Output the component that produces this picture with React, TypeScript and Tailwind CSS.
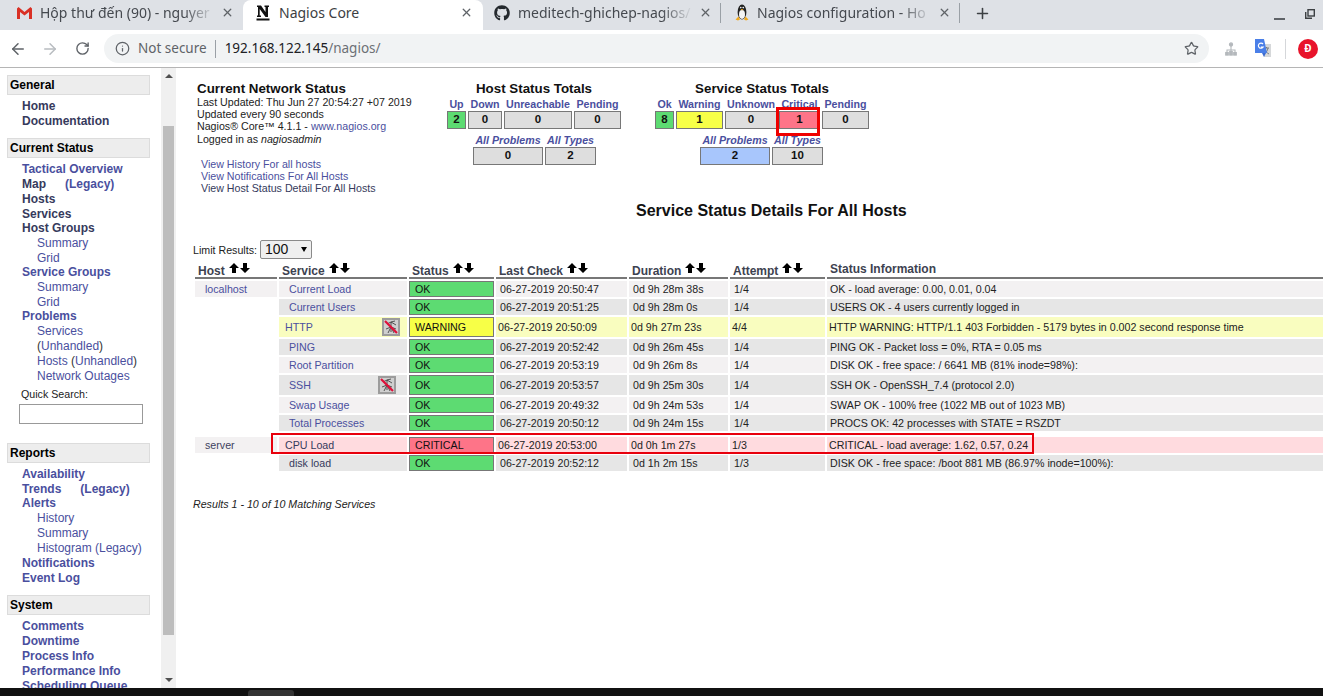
import { ArrowLeft, ArrowRight, Info, Plus, RotateCw, Star, X } from 'lucide-react'
import { FaGithub } from 'react-icons/fa'

const dark = 'text-[#363a5c]'
const link = 'text-[#4a4f9e]'

type NavItem = { label: string; legacy?: string; visited?: boolean; sub?: string[] }

const general: NavItem[] = [
  { label: 'Home', visited: true },
  { label: 'Documentation', visited: true },
]

const reports: NavItem[] = [
  { label: 'Availability' },
  { label: 'Trends', legacy: '(Legacy)' },
  { label: 'Alerts', sub: ['History', 'Summary', 'Histogram (Legacy)'] },
  { label: 'Notifications' },
  { label: 'Event Log' },
]

const system: NavItem[] = [
  { label: 'Comments' },
  { label: 'Downtime' },
  { label: 'Process Info' },
  { label: 'Performance Info' },
  { label: 'Scheduling Queue' },
]

type Row = {
  host?: string
  service: string
  status: 'OK' | 'WARNING' | 'CRITICAL'
  check: string
  duration: string
  attempt: string
  info: string
  icon?: 'http' | 'ssh'
  shade: 'odd' | 'even'
  visited?: boolean
}

const rows: Row[] = [
  { host: 'localhost', service: 'Current Load', status: 'OK', check: '06-27-2019 20:50:47', duration: '0d 9h 28m 38s', attempt: '1/4', info: 'OK - load average: 0.00, 0.01, 0.04', shade: 'odd' },
  { service: 'Current Users', status: 'OK', check: '06-27-2019 20:51:25', duration: '0d 9h 28m 0s', attempt: '1/4', info: 'USERS OK - 4 users currently logged in', shade: 'even' },
  { service: 'HTTP', status: 'WARNING', check: '06-27-2019 20:50:09', duration: '0d 9h 27m 23s', attempt: '4/4', info: 'HTTP WARNING: HTTP/1.1 403 Forbidden - 5179 bytes in 0.002 second response time', icon: 'http', shade: 'odd' },
  { service: 'PING', status: 'OK', check: '06-27-2019 20:52:42', duration: '0d 9h 26m 45s', attempt: '1/4', info: 'PING OK - Packet loss = 0%, RTA = 0.05 ms', shade: 'even' },
  { service: 'Root Partition', status: 'OK', check: '06-27-2019 20:53:19', duration: '0d 9h 26m 8s', attempt: '1/4', info: 'DISK OK - free space: / 6641 MB (81% inode=98%):', shade: 'odd' },
  { service: 'SSH', status: 'OK', check: '06-27-2019 20:53:57', duration: '0d 9h 25m 30s', attempt: '1/4', info: 'SSH OK - OpenSSH_7.4 (protocol 2.0)', icon: 'ssh', shade: 'even' },
  { service: 'Swap Usage', status: 'OK', check: '06-27-2019 20:49:32', duration: '0d 9h 24m 53s', attempt: '1/4', info: 'SWAP OK - 100% free (1022 MB out of 1023 MB)', shade: 'odd' },
  { service: 'Total Processes', status: 'OK', check: '06-27-2019 20:50:12', duration: '0d 9h 24m 15s', attempt: '1/4', info: 'PROCS OK: 42 processes with STATE = RSZDT', shade: 'even' },
]

const serverRows: Row[] = [
  { host: 'server', service: 'CPU Load', status: 'CRITICAL', check: '06-27-2019 20:53:00', duration: '0d 0h 1m 27s', attempt: '1/3', info: 'CRITICAL - load average: 1.62, 0.57, 0.24', shade: 'odd', visited: true },
  { service: 'disk load', status: 'OK', check: '06-27-2019 20:52:12', duration: '0d 1h 2m 15s', attempt: '1/3', info: 'DISK OK - free space: /boot 881 MB (86.97% inode=100%):', shade: 'even', visited: true },
]

function GmailIcon() {
  return (
    <svg width="15" height="12" viewBox="0 0 15 12" className="shrink-0">
      <path d="M0 1.5 V12 H3 V5 L7.5 8.5 L12 5 V12 H15 V1.5 L13.5 0 L7.5 5 L1.5 0 Z" fill="#d93025" />
    </svg>
  )
}

function NagiosIcon() {
  return (
    <svg width="14" height="16" viewBox="0 0 14 16" className="shrink-0">
      <path d="M1 0.5 H5 L9.5 7 V2 H8.5 V0.5 H13 V2 H12 V12 H9.5 L3.7 4 V10.5 H5 V12 H1 V10.5 H2 V2 H1 Z" fill="#111" />
      <rect x="0.5" y="13.5" width="13" height="2" fill="#111" />
    </svg>
  )
}

function TuxIcon() {
  return (
    <svg width="14" height="17" viewBox="0 0 14 17" className="shrink-0">
      <ellipse cx="7" cy="8" rx="4.4" ry="7.6" fill="#222" />
      <ellipse cx="7" cy="10.5" rx="3" ry="4.4" fill="#f4f4f4" />
      <circle cx="5.8" cy="3.6" r="0.8" fill="#fff" />
      <circle cx="8.2" cy="3.6" r="0.8" fill="#fff" />
      <path d="M5.6 5 H8.4 L7 6.4 Z" fill="#f0a81c" />
      <path d="M0.5 15.5 L3.5 12.5 L5 15.5 L3 16.5 Z M13.5 15.5 L10.5 12.5 L9 15.5 L11 16.5 Z" fill="#f0a81c" />
    </svg>
  )
}

function TranslateIcon() {
  return (
    <svg width="16" height="20" viewBox="0 0 16 20" className="shrink-0">
      <path d="M6 5 H16 V18 H9 Z" fill="#d6d8da" />
      <path d="M9 9 H14 M11.5 8 V9 M13 9 C12.5 12 11 13.5 9.5 14.5 M10 10.5 C10.8 12.5 12 14 14 15" stroke="#70757a" strokeWidth="0.9" fill="none" />
      <path d="M0 0 H9 L12 14 H0 Z" fill="#4a7fe8" />
      <path d="M8 5 A2.6 2.6 0 1 0 8.2 8 H5.8" stroke="#fff" strokeWidth="1.2" fill="none" />
      <path d="M7 14 L9 18 L11 14 Z" fill="#3d6bd0" />
    </svg>
  )
}

function ExtensionIcon() {
  return (
    <svg width="12" height="14" viewBox="0 0 12 14" className="shrink-0" fill="none" stroke="#b4b8bc" strokeWidth="1.1">
      <circle cx="6" cy="2.5" r="1.6" fill="#b4b8bc" />
      <path d="M6 4 V9 M2 11 V8 H10 V11" />
      <rect x="0.7" y="10.5" width="2.6" height="2.6" fill="#b4b8bc" />
      <rect x="4.7" y="9.5" width="2.6" height="3.6" fill="#b4b8bc" />
      <rect x="8.7" y="10.5" width="2.6" height="2.6" fill="#b4b8bc" />
    </svg>
  )
}

function Tab({ icon, title, x, active, sep, mask, width }: { icon: React.ReactNode; title: string; x: string; active?: boolean; sep?: boolean; mask?: boolean; width: string }) {
  return (
    <div className={`relative flex h-full items-center pb-[5px] ${width} ${x} ${active ? 'rounded-t-lg bg-white text-[#3c4043]' : 'text-[#45494f]'}`}>
      {icon}
      <span className={`mr-[6px] flex-1 overflow-hidden whitespace-nowrap text-[14px] ${mask ? '[mask-image:linear-gradient(to_right,black_82%,transparent)]' : ''}`}>{title}</span>
      <X size={13} strokeWidth={2.4} className="shrink-0 text-[#5f6368]" />
      {sep && <div className="absolute right-0 top-[3px] h-[20px] w-px bg-[#9aa0a6]" />}
    </div>
  )
}

function TabStrip() {
  return (
    <div className="flex h-[30px] shrink-0 items-end bg-[#dee1e6] font-['Noto_Sans',sans-serif]">
      <Tab width="w-[243px]" x="pl-[17px] pr-[9px]" title="Hộp thư đến (90) - nguyer" mask icon={<span className="mr-[8px]"><GmailIcon /></span>} />
      <Tab width="w-[240px]" x="pl-[13px] pr-[10px]" active title="Nagios Core" icon={<span className="mr-[9px]"><NagiosIcon /></span>} />
      <Tab width="w-[238px]" x="pl-[11px] pr-[9px]" sep mask title="meditech-ghichep-nagios/" icon={<span className="mr-[8px]"><FaGithub size={16} className="text-[#24292e]" /></span>} />
      <Tab width="w-[239px]" x="pl-[14px] pr-[9px]" sep mask title="Nagios configuration - Ho" icon={<span className="mr-[8px]"><TuxIcon /></span>} />
      <Plus size={17} strokeWidth={2.2} className="mb-[8px] ml-[14px] text-[#3c4043]" />
      <div className="mb-[10px] ml-auto flex items-center gap-[20px] pr-[8px]">
        <div className="mt-[10px] h-[2px] w-[11px] bg-[#5f6368]" />
        <svg width="10" height="10" viewBox="0 0 10 10" fill="none" stroke="#3c4043" strokeWidth="1.4">
          <rect x="3" y="0.7" width="6.3" height="6.3" />
          <path d="M0.7 3 V9.3 H7" />
        </svg>
      </div>
    </div>
  )
}

function Toolbar() {
  return (
    <div className="flex h-[38px] shrink-0 items-center border-b border-[#b5b5b5] bg-white font-['Noto_Sans',sans-serif]">
      <div className="flex w-[104px] items-center pl-[9px]">
        <ArrowLeft size={18} strokeWidth={2} className="text-[#5f6368]" />
        <ArrowRight size={18} strokeWidth={2} className="ml-[14px] text-[#b8bcc0]" />
        <RotateCw size={15} strokeWidth={2.2} className="ml-[16px] text-[#5f6368]" />
      </div>
      <div className="flex h-[29px] w-[1105px] items-center rounded-full bg-[#f1f3f4] pl-[11px] pr-[10px] text-[13.5px]">
        <Info size={15} strokeWidth={2} className="text-[#5f6368]" />
        <span className="ml-[8px] text-[#5f6368]">Not secure</span>
        <div className="ml-[8px] h-[18px] w-px bg-[#9aa0a6]" />
        <span className="ml-[9px] text-[#202124]">192.168.122.145<span className="text-[#6c7075]">/nagios/</span></span>
        <Star size={15} strokeWidth={2} className="ml-auto text-[#5f6368]" />
      </div>
      <div className="ml-[16px]"><ExtensionIcon /></div>
      <div className="ml-[18px]"><TranslateIcon /></div>
      <div className="ml-[14px] h-[20px] w-px bg-[#d5d7da]" />
      <div className="ml-[12px] flex h-[20px] w-[20px] items-center justify-center rounded-full bg-[#e8142b] text-[10px] font-bold text-white">Đ</div>
    </div>
  )
}

function NavHeading({ children }: { children: string }) {
  return <div className="flex h-[20px] w-[143px] items-center border border-[#dcdcdc] bg-[#ededed] pl-[2px] text-[12px] font-bold text-black">{children}</div>
}

function NavList({ items }: { items: NavItem[] }) {
  return (
    <div className="pl-[15px] pt-[3px]">
      {items.map((item) => (
        <div key={item.label} className={item.sub ? '-mt-px' : ''}>
          <div className={`flex h-[15px] items-center whitespace-nowrap text-[12px] font-bold ${item.visited ? dark : link}`}>
            <span>{item.label}</span>
            {item.legacy && <span className="ml-[19px]">{item.legacy}</span>}
          </div>
          {item.sub?.map((s) => (
            <div key={s} className={`flex h-[15px] items-center whitespace-nowrap pl-[15px] text-[12px] ${link}`}>{s}</div>
          ))}
        </div>
      ))}
    </div>
  )
}

function Sidebar() {
  return (
    <div className="flex h-full w-[176px] shrink-0 overflow-hidden font-['Liberation_Sans',sans-serif]">
      <div className="h-full w-[161px] shrink-0 pl-[7px] pt-[7px]">
        <NavHeading>General</NavHeading>
        <NavList items={general} />
        <div className="mt-[10px]"><NavHeading>Current Status</NavHeading></div>
        <div className="pl-[15px] pt-[3px] text-[12px]">
          <div className={`flex h-[15px] items-center font-bold ${link}`}>Tactical Overview</div>
          <div className="flex h-[15px] items-center font-bold">
            <span className={dark}>Map</span>
            <span className={`ml-[19px] ${link}`}>(Legacy)</span>
          </div>
          <div className={`flex h-[15px] items-center font-bold ${dark}`}>Hosts</div>
          <div className={`flex h-[15px] items-center font-bold ${dark}`}>Services</div>
          <div className={`-mt-px flex h-[15px] items-center font-bold ${dark}`}>Host Groups</div>
          <div className={`flex h-[15px] items-center pl-[15px] ${link}`}>Summary</div>
          <div className={`flex h-[15px] items-center pl-[15px] ${link}`}>Grid</div>
          <div className={`-mt-px flex h-[15px] items-center font-bold ${link}`}>Service Groups</div>
          <div className={`flex h-[15px] items-center pl-[15px] ${link}`}>Summary</div>
          <div className={`flex h-[15px] items-center pl-[15px] ${link}`}>Grid</div>
          <div className={`-mt-px flex h-[15px] items-center font-bold ${link}`}>Problems</div>
          <div className={`flex h-[15px] items-center pl-[15px] ${link}`}>Services</div>
          <div className="flex h-[15px] items-center whitespace-pre pl-[15px] text-[#333]">(<span className={link}>Unhandled</span>)</div>
          <div className="flex h-[15px] items-center whitespace-pre pl-[15px] text-[#333]"><span className={link}>Hosts</span> (<span className={link}>Unhandled</span>)</div>
          <div className={`flex h-[15px] items-center pl-[15px] ${link}`}>Network Outages</div>
        </div>
        <div className="mt-[5px] pl-[14px] text-[10.67px] leading-[13px] text-[#222]">Quick Search:</div>
        <div className="ml-[12px] mt-[3px] h-[20px] w-[124px] border border-[#999] bg-white" />
        <div className="mt-[19px]"><NavHeading>Reports</NavHeading></div>
        <NavList items={reports} />
        <div className="mt-[10px]"><NavHeading>System</NavHeading></div>
        <NavList items={system} />
      </div>
      <div className="flex h-full w-[15px] shrink-0 flex-col items-center bg-[#f0f0f0]">
        <div className="mt-[6px] h-0 w-0 border-x-[4px] border-b-[4px] border-x-transparent border-b-[#505050]" />
        <div className="mt-[48px] h-[509px] w-[11px] bg-[#bdbdbd]" />
        <div className="mt-[43px] h-0 w-0 border-x-[4px] border-t-[4px] border-x-transparent border-t-[#505050]" />
      </div>
    </div>
  )
}

function TotalCell({ value, width, tone }: { value: string; width: string; tone?: string }) {
  return (
    <div className={`flex h-[18px] items-center justify-center border border-[#777] text-[11.5px] font-bold text-[#111] ${width} ${tone ?? 'bg-[#dedede]'}`}>{value}</div>
  )
}

function TotalLabel({ children, width, italic }: { children: string; width: string; italic?: boolean }) {
  return <div className={`whitespace-nowrap text-center text-[10.67px] font-bold leading-[13px] ${link} ${width} ${italic ? 'italic' : ''}`}>{children}</div>
}

function HostTotals() {
  return (
    <div className="w-[174px] shrink-0">
      <div className="h-[17px] text-center text-[13.33px] font-bold leading-[15px] text-[#111]">Host Status Totals</div>
      <div className="flex gap-[2px]">
        <TotalLabel width="w-[19px]">Up</TotalLabel>
        <TotalLabel width="w-[34px]">Down</TotalLabel>
        <TotalLabel width="w-[68px]">Unreachable</TotalLabel>
        <TotalLabel width="w-[47px]">Pending</TotalLabel>
      </div>
      <div className="flex gap-[2px]">
        <TotalCell value="2" width="w-[19px]" tone="bg-[#5ddb72]" />
        <TotalCell value="0" width="w-[34px]" />
        <TotalCell value="0" width="w-[68px]" />
        <TotalCell value="0" width="w-[47px]" />
      </div>
      <div className="ml-[26px] mt-[5px] flex gap-[2px]">
        <TotalLabel italic width="w-[70px]">All Problems</TotalLabel>
        <TotalLabel italic width="w-[51px]">All Types</TotalLabel>
      </div>
      <div className="ml-[26px] flex gap-[2px]">
        <TotalCell value="0" width="w-[70px]" />
        <TotalCell value="2" width="w-[51px]" />
      </div>
    </div>
  )
}

function ServiceTotals() {
  return (
    <div className="relative ml-[34px] w-[214px] shrink-0">
      <div className="h-[17px] text-center text-[13.33px] font-bold leading-[15px] text-[#111]">Service Status Totals</div>
      <div className="flex gap-[2px]">
        <TotalLabel width="w-[19px]">Ok</TotalLabel>
        <TotalLabel width="w-[47px]">Warning</TotalLabel>
        <TotalLabel width="w-[52px]">Unknown</TotalLabel>
        <TotalLabel width="w-[41px]">Critical</TotalLabel>
        <TotalLabel width="w-[47px]">Pending</TotalLabel>
      </div>
      <div className="flex gap-[2px]">
        <TotalCell value="8" width="w-[19px]" tone="bg-[#5ddb72]" />
        <TotalCell value="1" width="w-[47px]" tone="bg-[#f7ff47]" />
        <TotalCell value="0" width="w-[52px]" />
        <TotalCell value="1" width="w-[41px]" tone="bg-[#fe7488]" />
        <TotalCell value="0" width="w-[47px]" />
      </div>
      <div className="ml-[45px] mt-[5px] flex gap-[2px]">
        <TotalLabel italic width="w-[70px]">All Problems</TotalLabel>
        <TotalLabel italic width="w-[51px]">All Types</TotalLabel>
      </div>
      <div className="ml-[45px] flex gap-[2px]">
        <TotalCell value="2" width="w-[70px]" tone="bg-[#a8c6fc]" />
        <TotalCell value="10" width="w-[51px]" />
      </div>
      {/* highlight box someone drew over the screenshot */}
      <div className="absolute left-[121px] top-[26px] h-[29px] w-[44px] border-[3px] border-[#f00000]" />
    </div>
  )
}

function SortArrows() {
  return (
    <svg width="21" height="10" viewBox="0 0 21 10" className="ml-[4px] mt-[2px] shrink-0" fill="#000">
      <path d="M5 0 L10 5 H7 V10 H3 V5 H0 Z" />
      <path d="M14 0 H18 V5 H21 L16 10 L11 5 H14 Z" />
    </svg>
  )
}

function Th({ label, width, sort = true }: { label: string; width: string; sort?: boolean }) {
  return (
    <th className={`h-[18px] border-b-2 border-[#777] p-0 text-left align-top ${width}`}>
      <div className={`flex h-[16px] pl-[3px] text-[12px] font-bold leading-[14px] text-[#3d4250] ${sort ? 'pt-[3px]' : 'pt-[1px]'}`}>
        <span className="whitespace-nowrap">{label}</span>
        {sort && <span className="-mt-[3px]"><SortArrows /></span>}
      </div>
    </th>
  )
}

function PassiveIcon() {
  return (
    <div className="flex h-[18px] w-[18px] items-center justify-center border-2 border-[#9c9c9c] bg-[#cfcfcf]">
      <svg width="14" height="14" viewBox="0 0 14 14" fill="none">
        <path d="M7 2 L11 1 M7 2 L3 4 M7 2 L12 5 M7 7 L2 9 M7 7 L12 9 M7 7 L4 13 M7 7 L10 13 M7 2 V12" stroke="#444" strokeWidth="0.9" />
        <path d="M1 1 L13 13" stroke="#e0103a" strokeWidth="2.2" />
      </svg>
    </div>
  )
}

function ServiceRow({ row }: { row: Row }) {
  const stateBg =
    row.status === 'WARNING' ? 'bg-[#f9fdbf]' : row.status === 'CRITICAL' ? 'bg-[#ffdbdf]' : row.shade === 'odd' ? 'bg-[#f3f1f2]' : 'bg-[#e6e6e6]'
  const flagged = row.status !== 'OK'
  const statusBg = row.status === 'OK' ? 'bg-[#5ddb72]' : row.status === 'WARNING' ? 'bg-[#f7ff47]' : 'bg-[#fe7488]'
  const pad = flagged ? 'pl-[2px]' : 'pl-[4px]'
  const tall = row.icon || row.status === 'WARNING' ? 'h-[20px]' : 'h-[16px]'
  const cell = 'p-0 text-[10.67px] leading-[12px]'

  return (
    <tr>
      <td className={`${cell} pl-[10px] ${tall} ${row.host ? 'bg-[#f3f1f2]' : ''} ${row.host === 'server' ? 'text-[#3f4260]' : link}`}>{row.host}</td>
      <td className={`${cell} ${tall} ${stateBg} ${row.visited ? dark : link}`}>
        <div className={`flex items-center justify-between ${flagged ? 'pl-[6px]' : 'pl-[10px]'} ${row.icon === 'http' ? 'pr-[7px]' : 'pr-[11px]'}`}>
          <span>{row.service}</span>
          {row.icon && <PassiveIcon />}
        </div>
      </td>
      <td className={`${cell} border border-[#777] pl-[5px] text-[#111] ${tall} ${statusBg}`}>{row.status}</td>
      <td className={`${cell} whitespace-nowrap text-[#222] ${tall} ${pad} ${stateBg}`}>{row.check}</td>
      <td className={`${cell} whitespace-nowrap text-[#222] ${tall} ${pad} ${stateBg}`}>{row.duration}</td>
      <td className={`${cell} whitespace-nowrap text-[#222] ${tall} ${pad} ${stateBg}`}>{row.attempt}</td>
      <td className={`${cell} whitespace-nowrap text-[#222] ${tall} ${flagged ? 'pl-[2px]' : 'pl-[3px]'} ${stateBg}`}>{row.info}</td>
    </tr>
  )
}

function ServiceTable() {
  return (
    <div className="relative">
      <table className="w-[1136px] table-fixed border-separate border-spacing-[2px]">
        <thead>
          <tr>
            <Th label="Host" width="w-[82px]" />
            <Th label="Service" width="w-[128px]" />
            <Th label="Status" width="w-[85px]" />
            <Th label="Last Check" width="w-[131px]" />
            <Th label="Duration" width="w-[99px]" />
            <Th label="Attempt" width="w-[95px]" />
            <Th label="Status Information" width="w-[500px]" sort={false} />
          </tr>
        </thead>
        <tbody>
          {rows.map((r) => <ServiceRow key={r.service} row={r} />)}
          <tr><td colSpan={7} className="h-[2px] p-0 leading-[2px]" /></tr>
          {serverRows.map((r) => <ServiceRow key={r.service} row={r} />)}
        </tbody>
      </table>
      {/* red annotation around the CPU Load row */}
      <div className="absolute left-[78px] top-[174px] h-[21px] w-[763px] border-2 border-[#e8000c]" />
    </div>
  )
}

function MainPanel() {
  return (
    <div className="min-w-0 flex-1 overflow-hidden bg-white pl-[17px] font-['Liberation_Sans',sans-serif]">
      <div className="flex h-[133px] pt-[13px]">
        <div className="w-[254px] shrink-0 pl-[4px] text-[10.67px] leading-[12.2px] text-[#222]">
          <div className="text-[13.33px] font-bold leading-[15px] text-[#111]">Current Network Status</div>
          <div>Last Updated: Thu Jun 27 20:54:27 +07 2019</div>
          <div>Updated every 90 seconds</div>
          <div>Nagios® Core™ 4.1.1 - <span className={link}>www.nagios.org</span></div>
          <div>Logged in as <i>nagiosadmin</i></div>
          <div className="mt-[13px] pl-[4px] leading-[12px]">
            <div className={link}>View History For all hosts</div>
            <div className={link}>View Notifications For All Hosts</div>
            <div className={dark}>View Host Status Detail For All Hosts</div>
          </div>
        </div>
        <HostTotals />
        <ServiceTotals />
      </div>
      <div className="ml-[443px] h-[20px] whitespace-nowrap text-[16px] font-bold leading-[20px] text-[#111]">Service Status Details For All Hosts</div>
      <div className="mt-[19px] flex h-[19px] items-center text-[10.67px] text-[#222]">
        <span>Limit Results:</span>
        <div className="ml-[3px] flex h-[19px] w-[52px] items-center justify-between rounded-[2px] border border-[#8a8a8a] bg-[#efefef] pl-[4px] pr-[4px] text-[14px] text-[#111]">
          <span>100</span>
          <div className="h-0 w-0 border-x-[3.5px] border-t-[5px] border-x-transparent border-t-black" />
        </div>
      </div>
      <ServiceTable />
      <div className="mt-[25px] text-[10.67px] italic leading-[13px] text-[#222]">Results 1 - 10 of 10 Matching Services</div>
    </div>
  )
}

export default function App() {
  return (
    <div className="flex h-[696px] w-[1323px] flex-col overflow-hidden bg-white">
      <TabStrip />
      <Toolbar />
      <div className="flex min-h-0 flex-1">
        <Sidebar />
        <MainPanel />
      </div>
      <div className="flex h-[8px] shrink-0 items-end bg-[#111] pl-[248px]">
        <div className="h-[6px] w-[46px] rounded-t-[3px] bg-[#333]" />
      </div>
    </div>
  )
}
